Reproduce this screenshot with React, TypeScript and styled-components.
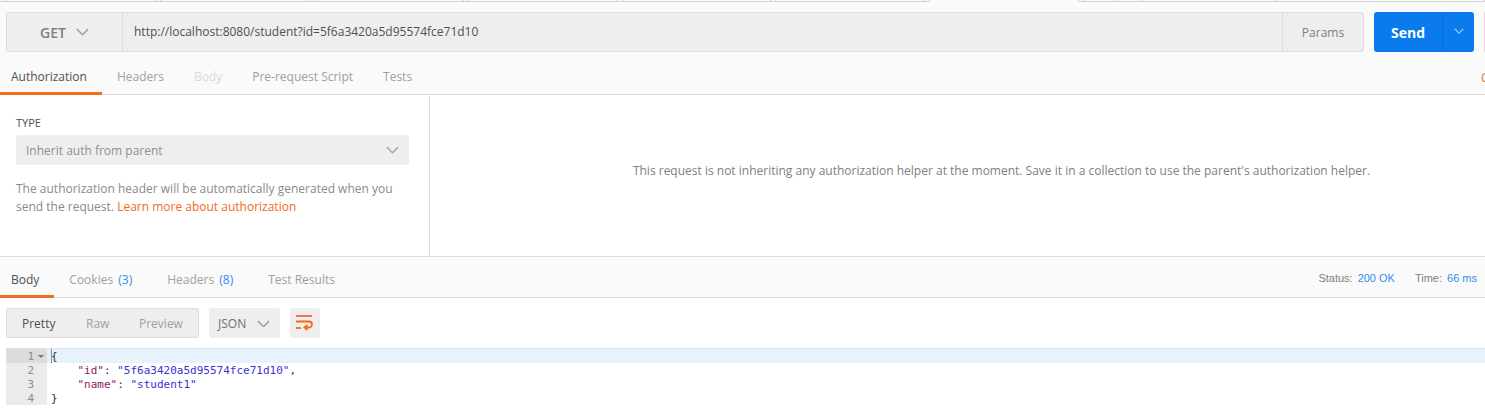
import React from "react";
import styled, { createGlobalStyle } from "styled-components";

const Global = createGlobalStyle`
  html, body { margin: 0; padding: 0; background: #fafafa; }
  * { box-sizing: border-box; }
`;

const Page = styled.div`
  width: 1485px;
  height: 410px;
  overflow: hidden;
  background: #fafafa;
  font-family: "Open Sans", sans-serif;
  font-size: 12px;
  color: #808080;
  display: flex;
  flex-direction: column;
`;

const TabStrip = styled.div`
  display: flex;
  height: 2px;
  flex: none;
`;

const StripTab = styled.div<{ $w: number; $active?: boolean }>`
  flex: ${(p) => (p.$w ? `0 0 ${p.$w}px` : "1")};
  border-bottom: ${(p) => (p.$active ? "none" : "1px solid #d4d4d4")};
  border-right: 1px solid #d4d4d4;
`;

const RequestRow = styled.div`
  display: flex;
  height: 40px;
  margin: 10px 0 0 6px;
  flex: none;
`;

const UrlGroup = styled.div`
  flex: 0 0 1358px;
  display: flex;
  background: #eeeeee;
  border: 1px solid #dcdcdc;
  border-radius: 3px;
`;

const MethodBox = styled.div`
  width: 116px;
  flex: none;
  display: flex;
  align-items: center;
  justify-content: center;
  gap: 10px;
  border-right: 1px solid #dcdcdc;
  font-size: 14px;
  font-weight: 600;
  color: #808080;
`;

const UrlText = styled.div`
  flex: 1;
  padding-left: 11px;
  display: flex;
  align-items: center;
  color: #505050;
  font-size: 12px;
  padding-bottom: 2px;
`;

const ParamsBox = styled.div`
  width: 81px;
  flex: none;
  border-left: 1px solid #dcdcdc;
  display: flex;
  align-items: center;
  justify-content: center;
  color: #808080;
`;

const SendButton = styled.div`
  margin-left: 10px;
  flex: 0 0 100px;
  display: flex;
  background: #097bed;
  border-radius: 3px;
  color: #fff;
`;

const SendLabel = styled.div`
  width: 69px;
  display: flex;
  align-items: center;
  justify-content: center;
  font-size: 14px;
  font-weight: 700;
  border-right: 1px solid #0a6fd4;
`;

const SendCaret = styled.div`
  flex: 1;
  display: flex;
  align-items: center;
  justify-content: center;
  padding-bottom: 3px;
`;

const NextButton = styled.div`
  margin-left: 10px;
  flex: 0 0 1px;
  background: #eeeeee;
  border-left: 1px solid #dcdcdc;
`;

const Tabs = styled.div<{ $h: number }>`
  display: flex;
  height: ${(p) => p.$h}px;
  flex: none;
  border-bottom: 1px solid #dcdcdc;
  position: relative;
`;

const Tab = styled.div<{ $active?: boolean; $faded?: boolean; $first?: boolean; $top: number }>`
  flex: none;
  padding: ${(p) => p.$top}px 15px 0 ${(p) => (p.$first ? 11 : 15)}px;
  line-height: 17px;
  margin-bottom: -1px;
  border-bottom: 3px solid ${(p) => (p.$active ? "#f26b21" : "transparent")};
  color: ${(p) => (p.$active ? "#505050" : p.$faded ? "#d9d9d9" : "#a0a0a0")};
`;

const Count = styled.span`
  color: #2f8fef;
  margin: 0 5px 0 2px;
`;

const CutOffLink = styled.div`
  position: absolute;
  left: 1481px;
  top: 17px;
  line-height: 17px;
  color: #f26b21;
`;

const AuthPanel = styled.div`
  display: flex;
  height: 162px;
  flex: none;
  background: #ffffff;
  border-bottom: 1px solid #dcdcdc;
`;

const AuthLeft = styled.div`
  width: 430px;
  flex: none;
  padding: 20px 20px 0 16px;
  border-right: 1px solid #dcdcdc;
`;

const FieldLabel = styled.div`
  font-size: 11px;
  line-height: 15px;
  color: #505050;
`;

const TypeSelect = styled.div`
  margin-top: 5px;
  height: 30px;
  background: #eeeeee;
  border-radius: 3px;
  display: flex;
  align-items: center;
  justify-content: space-between;
  padding: 0 10px;
  color: #909090;
`;

const HelpText = styled.p`
  margin: 15px 0 0;
  line-height: 18px;
  color: #8a8a8a;
  width: 385px;
`;

const OrangeLink = styled.span`
  color: #f26b21;
`;

const AuthRight = styled.div`
  flex: 1;
  display: flex;
  align-items: center;
  justify-content: center;
  padding: 0 0 10px 88px;
  color: #808080;
`;

const Stats = styled.div`
  position: absolute;
  right: 8px;
  top: 14px;
  display: flex;
  gap: 20px;
  font-family: "Liberation Sans", Arial, sans-serif;
  font-size: 11px;
  line-height: 14px;
`;

const Stat = styled.div`
  color: #808080;
  display: flex;
  gap: 5px;
`;

const StatValue = styled.span`
  color: #2f8fef;
`;

const ResponseBody = styled.div`
  flex: 1;
  background: #ffffff;
  display: flex;
  flex-direction: column;
  padding-left: 6px;
`;

const Toolbar = styled.div`
  display: flex;
  gap: 10px;
  padding-top: 10px;
  height: 50px;
  flex: none;
`;

const ViewGroup = styled.div`
  width: 193px;
  height: 30px;
  display: flex;
  align-items: center;
  padding: 1px 0 0 15px;
  background: #eeeeee;
  border: 1px solid #dcdcdc;
  border-radius: 3px;
`;

const ViewItem = styled.span<{ $active?: boolean; $w: number }>`
  flex: 0 0 ${(p) => p.$w}px;
  color: ${(p) => (p.$active ? "#505050" : "#a0a0a0")};
`;

const LangSelect = styled.div`
  width: 71px;
  height: 30px;
  background: #eeeeee;
  border-radius: 3px;
  display: flex;
  align-items: center;
  gap: 11px;
  padding: 1px 0 0 9px;
  color: #707070;
`;

const WrapButton = styled.div`
  width: 30px;
  height: 30px;
  background: #eeeeee;
  border-radius: 3px;
  display: flex;
  align-items: center;
  justify-content: center;
`;

const Editor = styled.div`
  font-family: "DejaVu Sans Mono", monospace;
  font-size: 11px;
  line-height: 16px;
  border-top: 1px solid #dfe3e8;
  color: #303030;
`;

const CodeLine = styled.div<{ $active?: boolean }>`
  display: flex;
  height: 14px;
  background: ${(p) => (p.$active ? "#e8f2fc" : "transparent")};
`;

const Gutter = styled.div<{ $active?: boolean }>`
  flex: 0 0 41px;
  background: ${(p) => (p.$active ? "#dcdcdc" : "#ebebeb")};
  color: #8c8c8c;
  text-align: right;
  padding-right: 13px;
  margin-right: 4px;
  position: relative;
`;

const Fold = styled.span`
  position: absolute;
  right: 3px;
  top: 6px;
  border-left: 3px solid transparent;
  border-right: 3px solid transparent;
  border-top: 3px solid #777;
`;

const Code = styled.div<{ $cursor?: boolean }>`
  white-space: pre;
  box-shadow: ${(p) => (p.$cursor ? "inset 1px 0 0 #8a8a8a" : "none")};
`;

const Key = styled.span`
  color: #92185c;
`;

const Str = styled.span`
  color: #3a2fd6;
`;

const Chevron = ({ size, color }: { size: number; color: string }) => (
  <svg width={size} height={size * 0.6} viewBox="0 0 14 8" fill="none" stroke={color} strokeWidth="1.6">
    <path d="M1 1l6 6 6-6" />
  </svg>
);

const WrapIcon = () => (
  <svg width="18" height="16" viewBox="0 0 18 16" fill="none" stroke="#f26b21" strokeWidth="1.8">
    <path d="M0 1h16" />
    <path d="M0 6.5h13a3 3 0 0 1 0 6H9" />
    <path d="M11.5 10l-3 2.5 3 2.5" />
    <path d="M0 13h5" />
  </svg>
);

const stripWidths = [7, 149, 5, 149, 5, 149, 5, 148, 6, 148, 5, 149, 5, 149, 6, 30, 28, 133, 0];

export default function App() {
  return (
    <Page>
      <Global />
      <TabStrip>
        {stripWidths.map((w, i) => (
          <StripTab key={i} $w={w} $active={i === 13} />
        ))}
      </TabStrip>
      <RequestRow>
        <UrlGroup>
          <MethodBox>
            GET <Chevron size={13} color="#a0a0a0" />
          </MethodBox>
          <UrlText>http://localhost:8080/student?id=5f6a3420a5d95574fce71d10</UrlText>
          <ParamsBox>Params</ParamsBox>
        </UrlGroup>
        <SendButton>
          <SendLabel>Send</SendLabel>
          <SendCaret>
            <Chevron size={10} color="#a8cdf5" />
          </SendCaret>
        </SendButton>
        <NextButton />
      </RequestRow>
      <Tabs $h={43}>
        <Tab $top={16} $first $active>Authorization</Tab>
        <Tab $top={16}>Headers</Tab>
        <Tab $top={16} $faded>Body</Tab>
        <Tab $top={16}>Pre-request Script</Tab>
        <Tab $top={16}>Tests</Tab>
        <CutOffLink>Cookies</CutOffLink>
      </Tabs>
      <AuthPanel>
        <AuthLeft>
          <FieldLabel>TYPE</FieldLabel>
          <TypeSelect>
            Inherit auth from parent
            <Chevron size={13} color="#a8a8a8" />
          </TypeSelect>
          <HelpText>
            The authorization header will be automatically generated when you send the request.{" "}
            <OrangeLink>Learn more about authorization</OrangeLink>
          </HelpText>
        </AuthLeft>
        <AuthRight>
          This request is not inheriting any authorization helper at the moment. Save it in a collection to use the parent's authorization helper.
        </AuthRight>
      </AuthPanel>
      <Tabs $h={41}>
        <Tab $top={14} $first $active>Body</Tab>
        <Tab $top={14}>Cookies <Count>(3)</Count></Tab>
        <Tab $top={14}>Headers <Count>(8)</Count></Tab>
        <Tab $top={14}>Test Results</Tab>
        <Stats>
          <Stat>Status: <StatValue>200 OK</StatValue></Stat>
          <Stat>Time: <StatValue>66 ms</StatValue></Stat>
        </Stats>
      </Tabs>
      <ResponseBody>
        <Toolbar>
          <ViewGroup>
            <ViewItem $w={64} $active>Pretty</ViewItem>
            <ViewItem $w={53}>Raw</ViewItem>
            <ViewItem $w={50}>Preview</ViewItem>
          </ViewGroup>
          <LangSelect>
            JSON <Chevron size={13} color="#a0a0a0" />
          </LangSelect>
          <WrapButton>
            <WrapIcon />
          </WrapButton>
        </Toolbar>
        <Editor>
          <CodeLine $active>
            <Gutter $active>1<Fold /></Gutter>
            <Code $cursor>{"{"}</Code>
          </CodeLine>
          <CodeLine>
            <Gutter>2</Gutter>
            <Code>{"    "}<Key>"id"</Key>: <Str>"5f6a3420a5d95574fce71d10"</Str>,</Code>
          </CodeLine>
          <CodeLine>
            <Gutter>3</Gutter>
            <Code>{"    "}<Key>"name"</Key>: <Str>"student1"</Str></Code>
          </CodeLine>
          <CodeLine>
            <Gutter>4</Gutter>
            <Code>{"}"}</Code>
          </CodeLine>
        </Editor>
      </ResponseBody>
    </Page>
  );
}
